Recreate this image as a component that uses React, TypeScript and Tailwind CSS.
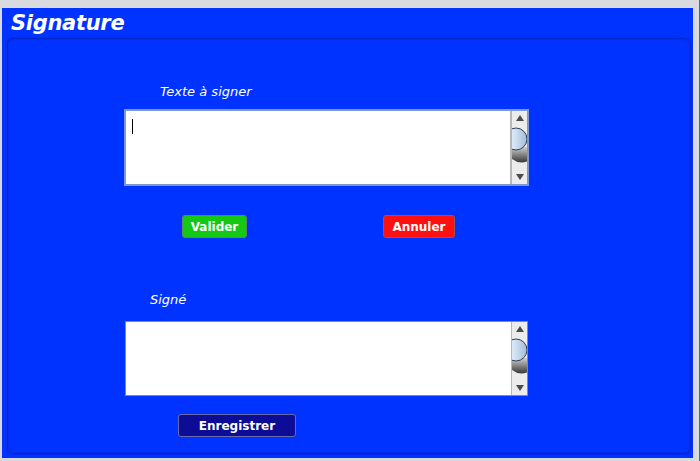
import React from "react";

function ScrollBar({ h }: { h: number }) {
  return (
    <div className="relative w-[16px] bg-[#ececec] border-l border-[#b8b8b8] flex flex-col items-center justify-between py-[3px] overflow-hidden" style={{ height: h }}>
      <svg width="10" height="8" viewBox="0 0 10 8"><path d="M5 1 L9 7 L1 7 Z" fill="#4a4a4a" /></svg>
      <svg className="absolute left-0" style={{ top: h / 2 - 21 }} width="16" height="40" viewBox="0 0 16 40">
        <defs>
          <linearGradient id="tg" x1="0" x2="1" y1="0" y2="0">
            <stop offset="0" stopColor="#f6f9fc" />
            <stop offset="0.45" stopColor="#d2e2f2" />
            <stop offset="1" stopColor="#a4bcd6" />
          </linearGradient>
          <linearGradient id="sg" x1="0" x2="0" y1="0" y2="1">
            <stop offset="0" stopColor="#cfcfcf" />
            <stop offset="1" stopColor="#3a3a3a" />
          </linearGradient>
        </defs>
        <path d="M0 20 L16 20 L16 34 A16 16 0 0 1 0 32 Z" fill="url(#sg)" />
        <circle cx="4" cy="12" r="11" fill="url(#tg)" stroke="#2c3e5c" strokeWidth="1" />
      </svg>
      <svg width="10" height="8" viewBox="0 0 10 8"><path d="M1 1 L9 1 L5 7 Z" fill="#4a4a4a" /></svg>
    </div>
  );
}

export default function App() {
  const f = { fontFamily: "Tahoma, 'DejaVu Sans', Verdana, sans-serif" };
  return (
    <div className="w-[700px] h-[461px] bg-[#d9dadf] pt-[8px] pl-[2px] overflow-hidden relative" style={f}>
      <div className="absolute right-0 top-0 w-[1px] h-full bg-[#3a6ea5]" />
      <div className="w-[691px] h-[450px] bg-[#0033ff] flex flex-col">
        <div className="h-[29px] pl-[9px] flex items-center">
          <span className="text-white font-bold italic text-[21px] leading-none tracking-[-0.3px] mt-[1px]" style={{ fontFamily: "'DejaVu Sans', Verdana, sans-serif" }}>Signature</span>
        </div>
        <div className="ml-[4px] w-[684px] h-[416px] rounded-[6px] border border-[#0a2de6] shadow-[inset_1px_1px_2px_rgba(0,0,80,0.35),1px_1px_2px_rgba(0,0,80,0.35)] flex flex-col">
          <div className="ml-[153px] mt-[46px] text-white italic text-[13px] leading-[16px]" style={{ fontFamily: "'DejaVu Sans', Verdana, sans-serif" }}>Texte à signer</div>
          <div className="ml-[117px] mt-[9px] w-[405px] h-[77px] border-[2px] border-[#7c98cc] bg-white flex">
            <div className="flex-1 relative">
              <div className="absolute left-[6px] top-[8px] w-[1px] h-[15px] bg-black" />
            </div>
            <div className="border-l border-[#b8b8b8]"><ScrollBar h={73} /></div>
          </div>
          <div className="mt-[29px] flex">
            <button className="ml-[175px] w-[65px] h-[23px] rounded-[3px] bg-[#14c814] border border-[#5a8a5a] text-white font-bold text-[12px] leading-none">Valider</button>
            <button className="ml-[136px] w-[72px] h-[23px] rounded-[3px] bg-[#ff1010] border border-[#a05050] text-white font-bold text-[12px] leading-none">Annuler</button>
          </div>
          <div className="ml-[143px] mt-[54px] text-white italic text-[13px] leading-[16px]" style={{ fontFamily: "'DejaVu Sans', Verdana, sans-serif" }}>Signé</div>
          <div className="ml-[118px] mt-[13px] w-[403px] h-[75px] border border-[#8a8a8a] bg-white flex">
            <div className="flex-1" />
            <ScrollBar h={73} />
          </div>
          <div className="mt-[18px] flex">
            <button className="ml-[171px] w-[118px] h-[23px] rounded-[3px] bg-[#0c0c96] border border-[#6a6aa8] text-white font-bold text-[12px] leading-none">Enregistrer</button>
          </div>
        </div>
      </div>
    </div>
  );
}
